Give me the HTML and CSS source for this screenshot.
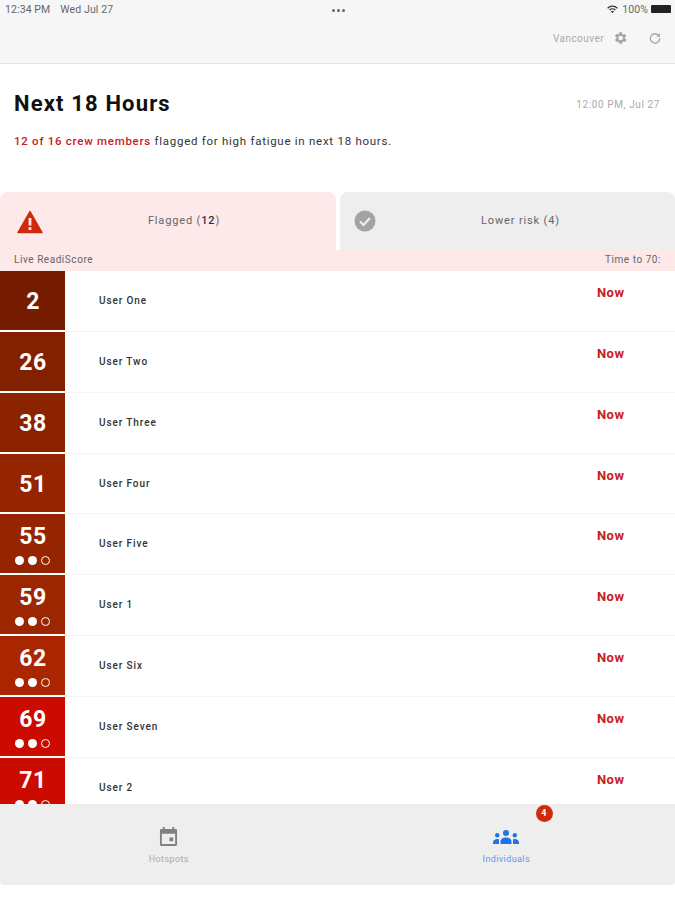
FILE: index.html
```html
<!DOCTYPE html>
<html>
<head>
  <title>Crew fatigue</title>
  <link rel="stylesheet" href="styles.css">
</head>
<body>
  <div class="page">
    <header class="top-bar">
      <div class="status-bar">
        <div class="status-left"><span>12:34 PM</span><span>Wed Jul 27</span></div>
        <div class="status-dots"><i></i><i></i><i></i></div>
        <div class="status-right">
          <svg class="wifi" viewBox="0 0 12 9"><path d="M0 3a8.500 8.500 0 0 1 12 0l-1 1.100a7 7 0 0 0-10 0zM2.200 5.200a5.400 5.400 0 0 1 7.600 0l-1 1a4 4 0 0 0-5.600 0zM4.200 7.200a2.600 2.600 0 0 1 3.600 0L6 9z"/></svg>
          <span>100%</span>
          <span class="battery"></span>
        </div>
      </div>
      <div class="tools">
        <span class="location">Vancouver</span>
        <svg class="gear" viewBox="0 0 24 24"><path d="M19.400 13a7.600 7.600 0 0 0 0-2l2.100-1.600-2-3.500-2.500 1a7.600 7.600 0 0 0-1.700-1L15 3.200h-4l-.4 2.700a7.600 7.600 0 0 0-1.700 1l-2.500-1-2 3.500L6.600 11a7.600 7.600 0 0 0 0 2l-2.100 1.600 2 3.500 2.500-1a7.600 7.600 0 0 0 1.700 1l.4 2.700h4l.4-2.700a7.600 7.600 0 0 0 1.700-1l2.500 1 2-3.500zM13 15.500a3.500 3.500 0 1 1 0-7 3.500 3.500 0 0 1 0 7z" fill-rule="evenodd"/></svg>
        <svg class="refresh" viewBox="0 0 24 24"><path d="M18.500 8A8 8 0 1 0 20 12" fill="none" stroke-width="2.200"/><path class="refresh-tip" d="M20.500 3.500v6.500H14z"/></svg>
      </div>
    </header>

    <section class="summary">
      <div class="summary-head">
        <h1>Next 18 Hours</h1>
        <span class="updated">12:00 PM, Jul 27</span>
      </div>
      <p><b>12 of 16 crew members</b> flagged for high fatigue in next 18 hours.</p>
    </section>

    <section class="tabs">
      <div class="tab active">
        <svg class="tab-icon" viewBox="0 0 26 24"><path d="M13 1.500 25 22.500H1z" fill="#d02a0c" stroke="#d02a0c" stroke-width="1.500" stroke-linejoin="round"/><rect x="11.600" y="8" width="2.800" height="7.500" fill="#fde9e9"/><rect x="11.600" y="17.200" width="2.800" height="2.800" fill="#fde9e9"/></svg>
        <span class="tab-label">Flagged (<b>12</b>)</span>
      </div>
      <div class="tab">
        <svg class="tab-icon" viewBox="0 0 22 22"><circle cx="11" cy="11" r="10.500" fill="#a3a3a3"/><path d="M6 11.500l3.500 3.500L16 8" fill="none" stroke="#eee" stroke-width="2.200"/></svg>
        <span class="tab-label">Lower risk (4)</span>
      </div>
    </section>
    <div class="labels"><span>Live ReadiScore</span><span>Time to 70:</span></div>

    <div class="list">
      <div class="row"><div class="score s1"><span>2</span></div><div class="name">User One</div><div class="time">Now</div></div>
      <div class="row"><div class="score s2"><span>26</span></div><div class="name">User Two</div><div class="time">Now</div></div>
      <div class="row"><div class="score s3"><span>38</span></div><div class="name">User Three</div><div class="time">Now</div></div>
      <div class="row"><div class="score s4"><span>51</span></div><div class="name">User Four</div><div class="time">Now</div></div>
      <div class="row"><div class="score s4"><span>55</span><div class="dots"><i></i><i></i><i class="empty"></i></div></div><div class="name">User Five</div><div class="time">Now</div></div>
      <div class="row"><div class="score s5"><span>59</span><div class="dots"><i></i><i></i><i class="empty"></i></div></div><div class="name">User 1</div><div class="time">Now</div></div>
      <div class="row"><div class="score s6"><span>62</span><div class="dots"><i></i><i></i><i class="empty"></i></div></div><div class="name">User Six</div><div class="time">Now</div></div>
      <div class="row"><div class="score s7"><span>69</span><div class="dots"><i></i><i></i><i class="empty"></i></div></div><div class="name">User Seven</div><div class="time">Now</div></div>
      <div class="row"><div class="score s7"><span>71</span><div class="dots"><i></i><i></i><i class="empty"></i></div></div><div class="name">User 2</div><div class="time">Now</div></div>
    </div>

    <nav class="bottom-nav">
      <div class="nav-item">
        <svg class="nav-icon" viewBox="0 0 20 20"><path d="M4 0h2v2h8V0h2v2h1.500A1.500 1.500 0 0 1 19 3.500v15a1.500 1.500 0 0 1-1.500 1.500h-15A1.500 1.500 0 0 1 1 18.500v-15A1.500 1.500 0 0 1 2.500 2H4zM3 7v11h14V7z" fill="#808080" fill-rule="evenodd"/><rect x="11" y="11" width="4" height="4" fill="#808080"/></svg>
        <span>Hotspots</span>
      </div>
      <div class="nav-item current">
        <svg class="nav-icon people" viewBox="0 0 26 14"><g fill="#1f74ea"><circle cx="13" cy="3" r="3"/><path d="M7.500 14v-2.500C7.500 9 10 7.500 13 7.500s5.500 1.500 5.500 4V14z"/><circle cx="4.200" cy="5.200" r="2.200"/><path d="M0 14v-1.500C0 10.500 2 9 4.200 9c.7 0 1.300.1 1.800.4V14z"/><circle cx="21.800" cy="5.200" r="2.200"/><path d="M26 14v-1.500C26 10.500 24 9 21.800 9c-.7 0-1.300.1-1.800.4V14z"/></g></svg>
        <span>Individuals</span>
        <em class="badge">4</em>
      </div>
    </nav>
    <div class="page-end"></div>
  </div>
</body>
</html>
```

FILE: styles.css
```css
body {
  margin: 0;
  background-color: #fff;
  font-family: Roboto, "Liberation Sans", sans-serif;
  color: #222;
}

.page {
  width: 675px;
  height: 900px;
  display: flex;
  flex-direction: column;
  overflow: hidden;
}

/* top bar */
.top-bar {
  height: 63px;
  flex: none;
  background-color: #f6f6f6;
  border-bottom: 1px solid #e3e3e3;
}

.status-bar {
  height: 18px;
  padding: 0 4px 0 5px;
  display: grid;
  grid-template-columns: 1fr auto 1fr;
  align-items: center;
  font-size: 10.5px;
  letter-spacing: 0.1px;
  color: #666;
}

.status-left {
  display: flex;
  gap: 10px;
}

.status-dots {
  display: flex;
  gap: 2px;
  padding-top: 3px;
}

.status-dots i {
  width: 3px;
  height: 3px;
  border-radius: 50%;
  background-color: #666;
}

.status-right {
  display: flex;
  justify-content: flex-end;
  align-items: center;
  gap: 3px;
}

.wifi {
  width: 11px;
  height: 8px;
  margin-right: 1px;
  fill: #333;
}

.battery {
  width: 20px;
  height: 8px;
  background-color: #222;
  border-radius: 1px;
}

.tools {
  height: 45px;
  padding-right: 13px;
  display: flex;
  justify-content: flex-end;
  align-items: center;
  box-sizing: border-box;
  padding-bottom: 5px;
}

.location {
  font-size: 10px;
  letter-spacing: 0.45px;
  color: #aaa;
  margin-right: 8px;
}

.gear {
  width: 16px;
  height: 16px;
  fill: #a4a4a4;
  margin-right: 20px;
}

.refresh {
  width: 14px;
  height: 14px;
  stroke: #a8a8a8;
  fill: none;
}

.refresh-tip {
  fill: #a8a8a8;
  stroke: none;
}

/* summary */
.summary {
  height: 128px;
  flex: none;
  box-sizing: border-box;
  padding: 27px 14px 0;
}

.summary-head {
  display: flex;
  justify-content: space-between;
  align-items: center;
}

h1 {
  margin: 0;
  font-size: 22px;
  line-height: 26px;
  font-weight: 700;
  letter-spacing: 1.15px;
  color: #111;
}

.updated {
  font-size: 10px;
  letter-spacing: 0.6px;
  color: #aaa;
  margin-right: 1px;
}

.summary p {
  margin: 17px 0 0;
  font-size: 11.5px;
  line-height: 14px;
  letter-spacing: 0.73px;
  color: #333;
}

.summary p b {
  font-weight: 500;
  color: #c8201a;
}

/* tabs */
.tabs {
  height: 58px;
  flex: none;
  display: grid;
  grid-template-columns: 336px 1fr;
  column-gap: 4px;
}

.tab {
  display: flex;
  align-items: center;
  justify-content: center;
  position: relative;
  box-sizing: border-box;
  padding: 0 0 2px 26px;
  background-color: #eee;
  border-radius: 8px 8px 0 0;
  font-size: 11px;
  letter-spacing: 0.85px;
  color: #666;
}

.tab.active {
  padding-left: 32px;
  background-color: #fde9e9;
}

.tab-label b {
  font-weight: 500;
  color: #333;
}

.tab-icon {
  position: absolute;
  left: 17px;
  top: 18px;
  width: 26px;
  height: 24px;
}

.tab:not(.active) .tab-icon {
  left: 14px;
  top: 18px;
  width: 22px;
  height: 22px;
}

.labels {
  height: 21px;
  flex: none;
  box-sizing: border-box;
  padding: 0 14px 2px;
  display: flex;
  justify-content: space-between;
  align-items: center;
  background-color: #fde9e9;
  font-size: 10px;
  letter-spacing: 0.55px;
  color: #666;
}

/* list */
.list {
  flex: 1;
  min-height: 0;
  overflow: hidden;
  display: grid;
  grid-auto-rows: 60.85px;
}

.row {
  display: grid;
  grid-template-columns: 65px 1fr 100px;
  border-bottom: 1px solid #f4f4f4;
}

.score {
  margin-bottom: -1px;
  border-bottom: 2px solid #fff;
  padding-left: 1px;
  display: flex;
  flex-direction: column;
  align-items: center;
  color: #fff;
  font-size: 23px;
  font-weight: 700;
  letter-spacing: 0.5px;
}

.score span {
  line-height: 27px;
  margin-top: 17px;
}

.score span:has(+ .dots) {
  margin-top: 9px;
}

.s1 { background-color: #761c00; }
.s2 { background-color: #832000; }
.s3 { background-color: #8b2300; }
.s4 { background-color: #952500; }
.s5 { background-color: #9c2600; }
.s6 { background-color: #aa2600; }
.s7 { background-color: #cb0a00; }

.dots {
  display: flex;
  gap: 4px;
  margin: 6px 0 0 -1px;
}

.dots i {
  width: 9px;
  height: 9px;
  border-radius: 50%;
  background-color: #fff;
}

.dots i.empty {
  box-sizing: border-box;
  background-color: transparent;
  border: 1.5px solid #fff;
}

.name {
  padding: 24px 0 0 34px;
  font-size: 10px;
  font-weight: 500;
  letter-spacing: 0.9px;
  color: #333;
}

.time {
  padding: 14px 0 0 22px;
  font-size: 13px;
  font-weight: 700;
  letter-spacing: 0.45px;
  color: #c8201a;
}

/* bottom nav */
.bottom-nav {
  height: 81px;
  flex: none;
  display: grid;
  grid-template-columns: 1fr 1fr;
  background-color: #eee;
  border-radius: 0 0 4px 4px;
  position: relative;
}

.nav-item {
  display: flex;
  flex-direction: column;
  align-items: center;
  padding-top: 23px;
  font-size: 9px;
  letter-spacing: 0.4px;
  color: #aaa;
  position: relative;
}

.nav-item span {
  margin-top: 8px;
}

.nav-icon {
  width: 19px;
  height: 19px;
}

.nav-icon.people {
  width: 26px;
  height: 14px;
  margin: 3px 0 2px;
}

.current {
  color: #5c97f0;
}

.badge {
  position: absolute;
  left: 198px;
  top: 1px;
  width: 17px;
  height: 17px;
  border-radius: 50%;
  background-color: #d02a0c;
  color: #fff;
  font-size: 9px;
  font-style: normal;
  font-weight: 700;
  line-height: 17px;
  text-align: center;
}

.page-end {
  height: 15px;
  flex: none;
}
```
